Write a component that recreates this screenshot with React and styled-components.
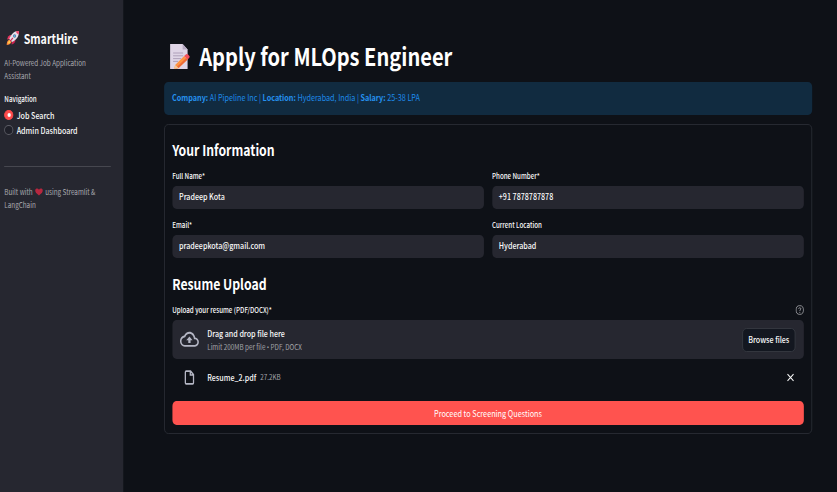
import React from "react";
import styled, { createGlobalStyle } from "styled-components";

/* The page is set on a wider canvas and condensed horizontally. */
const K = 0.833;
const w = (n) => `${(n / K).toFixed(2)}px`;

const GlobalStyle = createGlobalStyle`
  * { box-sizing: border-box; }
  html, body { margin: 0; background: #0e1117; overflow: hidden; }
  h1, h2, h3, p { margin: 0; }
`;

const Page = styled.div`
  display: flex;
  width: ${w(837)};
  height: 492px;
  overflow: hidden;
  transform: scaleX(${K});
  transform-origin: 0 0;
  background: #0e1117;
  color: #fafafa;
  font-family: "Noto Sans CJK SC", "Noto Sans", sans-serif;
  font-size: 8.57px;
  font-weight: 500;
  white-space: nowrap;
`;

const Sidebar = styled.aside`
  flex: none;
  width: ${w(123)};
  height: 100%;
  padding: 28px ${w(12)} 0 ${w(4.3)};
  background: #262730;
`;

const Brand = styled.h2`
  display: flex;
  align-items: center;
  gap: ${w(3.7)};
  height: 20px;
  font-size: 12.8px;
  line-height: 21px;
  font-weight: 600;
  svg { width: ${w(14)}; height: 16px; margin-left: ${w(1.7)}; }
`;

const Caption = styled.p`
  margin-top: ${(p) => p.$top}px;
  font-size: 7.6px;
  font-weight: 400;
  line-height: 13.4px;
  color: #aaabb0;
  svg { width: ${w(8)}; height: 8px; margin: 0 1px; vertical-align: -1px; }
`;

const NavLabel = styled.p`
  margin-top: 9px;
  font-size: 7.5px;
  line-height: 14px;
  margin-bottom: 2px;
`;

const NavItem = styled.div`
  display: flex;
  align-items: center;
  gap: ${w(3.4)};
  height: 15px;
  line-height: 15px;
`;

const Radio = styled.span`
  display: flex;
  align-items: center;
  justify-content: center;
  width: ${w(9)};
  height: 10px;
  border-radius: 50%;
  border: 1px solid ${(p) => (p.$on ? "#ff4b4b" : "#5d5e66")};
  background: ${(p) => (p.$on ? "#ff4b4b" : "#1f2029")};
  &::after {
    content: "";
    width: 4px;
    height: 4px;
    border-radius: 50%;
    background: ${(p) => (p.$on ? "#fff" : "transparent")};
  }
`;

const Divider = styled.div`
  height: 1px;
  margin-top: 28px;
  background: #46474f;
`;

const Main = styled.main`
  flex: 1;
  min-width: 0;
  padding: 37px ${w(25)} 0 ${w(41)};
`;

const Title = styled.h1`
  display: flex;
  align-items: center;
  gap: ${w(9)};
  height: 38px;
  font-size: 24.1px;
  line-height: 38px;
  font-weight: 700;
  color: #fff;
  svg { width: ${w(21)}; height: 27px; margin-left: ${w(5.2)}; }
`;

const Info = styled.div`
  height: 33px;
  margin-top: 7px;
  padding: 0 ${w(8)};
  border-radius: 5px;
  background: #112b40;
  color: #1d8aea;
  font-size: 8.7px;
  font-weight: 400;
  line-height: 32px;
  b { font-weight: 700; color: #2591ef; }
`;

const Form = styled.form`
  height: 310px;
  margin-top: 9px;
  padding: 15px ${w(7.4)} 0;
  border: 1px solid #292c33;
  border-radius: 5px;
`;

const Heading = styled.h3`
  height: 20px;
  margin-top: ${(p) => p.$top || 0}px;
  font-size: 14.7px;
  line-height: 19px;
  font-weight: 600;
  color: #fff;
`;

const Fields = styled.div`
  display: grid;
  grid-template-columns: 1fr 1fr;
  column-gap: ${w(8)};
  row-gap: 9px;
  margin-top: 9px;
`;

const Label = styled.div`
  display: flex;
  align-items: center;
  justify-content: space-between;
  height: 14px;
  margin-bottom: 3px;
  font-size: 7.47px;
  line-height: 14px;
`;

const Value = styled.div`
  height: 23px;
  padding: 0 ${w(6.8)};
  border-radius: 5px;
  background: #262730;
  line-height: 21px;
`;

const UploadLabel = styled(Label)`
  margin-top: 9px;
  svg { width: ${w(8.5)}; height: 10px; }
`;

const Dropzone = styled.div`
  display: flex;
  align-items: center;
  height: 39px;
  padding: 0 ${w(8)};
  border-radius: 5px;
  background: #262730;
  svg { width: ${w(19)}; height: 22.5px; margin-right: ${w(8)}; }
`;

const DropText = styled.div`
  flex: 1;
  line-height: 14px;
`;

const Small = styled.div`
  font-size: 7.6px;
  font-weight: 400;
  line-height: 14px;
  color: #a3a4a9;
`;

const Bullet = styled.span`
  font-family: "Open Sans", sans-serif;
`;

const Browse = styled.button`
  width: ${w(54)};
  height: 24px;
  padding: 0;
  border: 1px solid #363941;
  border-radius: 5px;
  background: #131720;
  color: #fafafa;
  font: inherit;
  line-height: 21px;
`;

const FileRow = styled.div`
  display: flex;
  align-items: center;
  height: 20px;
  margin: 8px 0 14px;
  padding: 0 ${w(8)} 0 ${w(10.5)};
  line-height: 18px;
`;

const FileIcon = styled.svg`
  width: ${w(14)};
  height: 17px;
  margin-right: ${w(10.5)};
`;

const FileSize = styled.span`
  flex: 1;
  margin-left: ${w(4)};
  font-size: 7.6px;
  font-weight: 400;
  color: #a3a4a9;
`;

const CloseIcon = styled.svg`
  width: ${w(10)};
  height: 11px;
`;

const Submit = styled.button`
  display: block;
  width: 100%;
  height: 24px;
  padding: 0;
  border: 0;
  border-radius: 5px;
  background: #ff534f;
  color: #fff;
  font: inherit;
  font-size: 8.75px;
  font-weight: 400;
  line-height: 23px;
`;

const Rocket = () => (
  <svg viewBox="0 0 32 32" preserveAspectRatio="none">
    <path d="M12 10 C7 10 4 14 3 19 L10 18Z" fill="#e5365f" />
    <path d="M22 20 C22 25 18 28 13 29 L14 22Z" fill="#c9214f" />
    <path d="M8 19 C3 21 2 25 2 30 C7 30 11 28 13 24Z" fill="#ff8a3d" />
    <path d="M9 21 C6 22 5 24 5 27 C8 27 10 26 11 23Z" fill="#ffd04a" />
    <path d="M30 2 C20 1 12 8 8 18 L14 24 C24 20 31 12 30 2Z" fill="#e3dfe9" />
    <path d="M30 2 L23 2.5 C24 6 26 8 29.5 9Z" fill="#f0446a" />
    <circle cx="20" cy="12" r="3.6" fill="#66708d" />
    <circle cx="20" cy="12" r="2.1" fill="#4bb9f3" />
    <path d="M15 15 L9 22 L11 23 L17 17Z" fill="#d42b57" />
  </svg>
);

const Memo = () => (
  <svg viewBox="0 0 21 27" preserveAspectRatio="none">
    <path d="M1 1 H13.5 L18.5 6.5 V26 H1Z" fill="#dfd5e6" />
    <path d="M13.5 1 V6.5 H18.5Z" fill="#b6a9c2" />
    <path d="M4 10 H14 M4 12.8 H14 M4 15.6 H12 M4 18.4 H9" stroke="#a193ad" strokeWidth=".8" />
    <path d="M6 22 L15 13 L18.5 16.5 L9.5 25 L5 26Z" fill="#ff9442" />
    <path d="M8 23.8 L17 15 L18.5 16.5 L9.5 25 L6 25.8Z" fill="#ed6a37" />
    <path d="M15 13 L17 11.2 Q18 10.5 19 11.5 L20.3 13 Q21 14 20 15 L18.5 16.5Z" fill="#f2505c" />
    <path d="M6 22 L9.5 25 L5 26Z" fill="#f3c79b" />
  </svg>
);

const Heart = () => (
  <svg viewBox="0 0 16 16" preserveAspectRatio="none">
    <path d="M8 15 C3 11 .5 8.5 .5 5 C.5 .5 6 -.2 8 3.5 C10 -.2 15.5 .5 15.5 5 C15.5 8.5 13 11 8 15Z" fill="#b6273f" />
  </svg>
);

const Help = () => (
  <svg viewBox="0 0 24 24" preserveAspectRatio="none" fill="none" stroke="#a3a4a9" strokeWidth="2.2">
    <circle cx="12" cy="12" r="10.5" />
    <path d="M9 9.3 C9.3 5.5 15 5.6 15 9.2 C15 11.5 12 11.5 12 14.3 M12 16.5 V18.8" />
  </svg>
);

const Cloud = () => (
  <svg viewBox="0 0 24 24" preserveAspectRatio="none" fill="#b4b6c4">
    <path d="M19.35 10.04C18.67 6.59 15.64 4 12 4 9.11 4 6.6 5.64 5.35 8.04 2.34 8.36 0 10.91 0 14c0 3.31 2.69 6 6 6h13c2.76 0 5-2.24 5-5 0-2.64-2.05-4.78-4.65-4.96zM19 18H6c-2.21 0-4-1.79-4-4 0-2.05 1.53-3.76 3.56-3.97l1.07-.11.5-.95C8.08 7.14 9.94 6 12 6c2.62 0 4.88 1.86 5.39 4.43l.3 1.5 1.53.11c1.56.1 2.78 1.41 2.78 2.96 0 1.65-1.35 3-3 3zM8 13h2.55v3h2.9v-3H16l-4-4z" />
  </svg>
);

const fields = [
  ["Full Name*", "Pradeep Kota"],
  ["Phone Number*", "+91 7878787878"],
  ["Email*", "pradeepkota@gmail.com"],
  ["Current Location", "Hyderabad"],
];

export default function App() {
  return (
    <>
      <GlobalStyle />
      <Page>
        <Sidebar>
          <Brand><Rocket />SmartHire</Brand>
          <Caption $top={8}>AI-Powered Job Application<br />Assistant</Caption>
          <NavLabel>Navigation</NavLabel>
          <NavItem><Radio $on />Job Search</NavItem>
          <NavItem><Radio />Admin Dashboard</NavItem>
          <Divider />
          <Caption $top={18}>Built with <Heart /> using Streamlit &amp;<br />LangChain</Caption>
        </Sidebar>
        <Main>
          <Title><Memo />Apply for MLOps Engineer</Title>
          <Info>
            <b>Company:</b> AI Pipeline Inc | <b>Location:</b> Hyderabad, India | <b>Salary:</b> 25-38 LPA
          </Info>
          <Form onSubmit={(e) => e.preventDefault()}>
            <Heading>Your Information</Heading>
            <Fields>
              {fields.map(([label, value]) => (
                <div key={label}>
                  <Label>{label}</Label>
                  <Value>{value}</Value>
                </div>
              ))}
            </Fields>
            <Heading $top={16}>Resume Upload</Heading>
            <UploadLabel>Upload your resume (PDF/DOCX)*<Help /></UploadLabel>
            <Dropzone>
              <Cloud />
              <DropText>
                Drag and drop file here
                <Small>Limit 200MB per file <Bullet>•</Bullet> PDF, DOCX</Small>
              </DropText>
              <Browse type="button">Browse files</Browse>
            </Dropzone>
            <FileRow>
              <FileIcon viewBox="0 0 24 24" preserveAspectRatio="none" fill="none" stroke="#b4b6c4" strokeWidth="2.2">
                <path d="M14 3 H6.5 Q5 3 5 4.5 V19.5 Q5 21 6.5 21 H17.5 Q19 21 19 19.5 V8Z M13.5 3 V8.5 H19" />
              </FileIcon>
              Resume_2.pdf
              <FileSize>27.2KB</FileSize>
              <CloseIcon viewBox="0 0 10 10" preserveAspectRatio="none" stroke="#fafafa" strokeWidth="1.05">
                <path d="M2 2 L8 8 M8 2 L2 8" />
              </CloseIcon>
            </FileRow>
            <Submit>Proceed to Screening Questions</Submit>
          </Form>
        </Main>
      </Page>
    </>
  );
}
